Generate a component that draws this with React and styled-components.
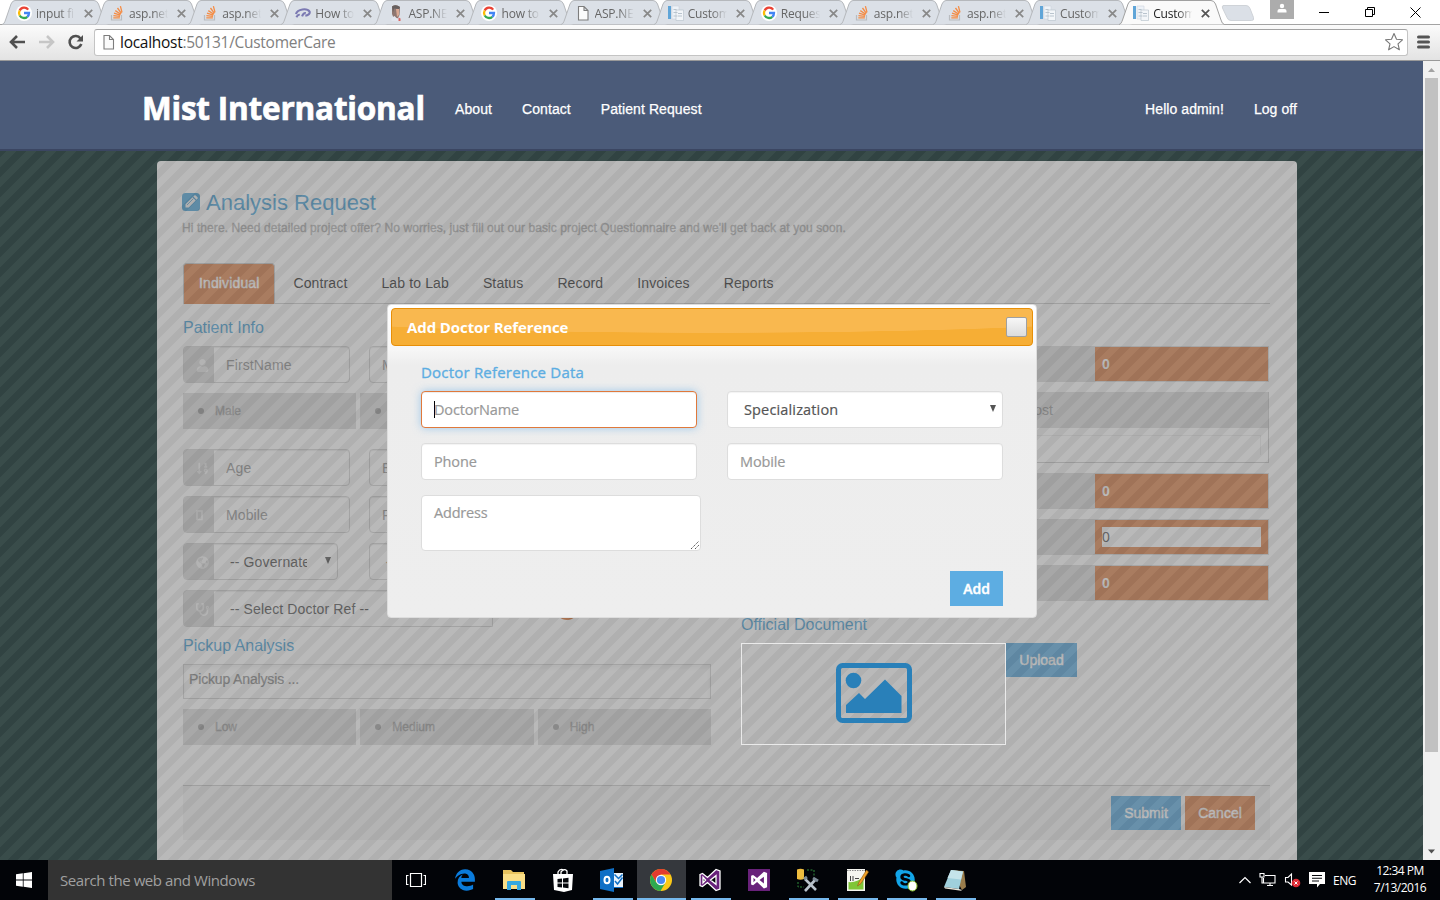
import React from "react";
import styled, { createGlobalStyle, css } from "styled-components";
import { FaEdgeLegacy, FaSkype, FaStethoscope, FaGlobeAmericas, FaUser, FaSortNumericDown } from "react-icons/fa";

const ui = '"Open Sans", "Noto Sans", sans-serif';
const arial = '"Liberation Sans", Arial, sans-serif';

const GlobalStyle = createGlobalStyle`
  *, *::before, *::after { box-sizing: border-box; }
  html, body { margin: 0; padding: 0; overflow: hidden; }
  body { font-family: ${arial}; font-size: 14px; color: #555; }
`;

const Desktop = styled.div`
  width: 1440px;
  height: 900px;
  display: flex;
  flex-direction: column;
  overflow: hidden;
  background: #fff;
`;

/* ---------- browser window ---------- */

const TabStrip = styled.div`
  height: 25px;
  flex: none;
  display: flex;
  position: relative;
  padding-left: 2px;
  border-bottom: 1px solid #a3a3a3;
`;

const TabShell = styled.div`
  width: 93.1px;
  height: 25px;
  flex: none;
  position: relative;
  z-index: ${(p) => (p.$active ? 2 : 1)};
`;

const TabShape = styled.svg`
  position: absolute;
  left: 0;
  top: 0;
  overflow: visible;
`;

const TabBody = styled.div`
  position: relative;
  height: 25px;
  display: flex;
  align-items: center;
  padding: 1px 0 0 14px;
`;

const Favicon = styled.span`
  width: 16px;
  height: 16px;
  flex: none;
  display: flex;
`;

const TabTitle = styled.span`
  width: 40px;
  margin-left: 4px;
  white-space: nowrap;
  font: 12px ${ui};
  letter-spacing: -0.2px;
  color: ${(p) => (p.$active ? "#222" : "#666")};
  mask-image: linear-gradient(90deg, #000 60%, transparent 98%);
`;

const TabClose = styled.svg`
  margin-left: 8px;
  flex: none;
`;

const WindowButtons = styled.div`
  margin: 0 2px 0 auto;
  display: flex;
  height: 24px;
`;

const ProfileBox = styled.div`
  width: 24px;
  height: 19px;
  margin-right: 8px;
  background: #acacac;
  display: flex;
  justify-content: center;
`;

const WindowButton = styled.div`
  width: 45.5px;
  height: 24px;
  display: flex;
  align-items: center;
  justify-content: center;
`;

const Toolbar = styled.div`
  height: 36px;
  flex: none;
  display: flex;
  align-items: center;
  padding: 0 10px 2px 8px;
  background: linear-gradient(#fbfbfb, #e3e3e3);
  border-bottom: 1px solid #999;
`;

const AddressBar = styled.div`
  flex: 1;
  height: 27px;
  margin: 1px 9px 0 10px;
  padding: 0 3px 0 7px;
  display: flex;
  align-items: center;
  border: 1px solid #c4c4c4;
  border-top-color: #a2a2a2;
  border-radius: 3px;
  background: #fff;
`;

const Url = styled.span`
  margin-left: 5px;
  flex: 1;
  font: 15.5px ${ui};
  letter-spacing: -0.28px;
  color: #808080;
  b { font-weight: 400; color: #111; }
`;

const Viewport = styled.div`
  height: 799px;
  flex: none;
  display: flex;
`;

const Page = styled.div`
  width: 1423px;
  height: 799px;
  position: relative;
  overflow: hidden;
  background: #002523;
`;

const Scrollbar = styled.div`
  width: 17px;
  background: #f1f1f1;
  display: flex;
  flex-direction: column;
  align-items: center;
`;

const ScrollThumb = styled.div`
  width: 13px;
  height: 674px;
  background: #c1c1c1;
`;

const ScrollArrow = styled.svg`
  width: 17px;
  height: 17px;
  flex: none;
  margin-top: ${(p) => (p.$bottom ? "auto" : 0)};
`;

/* ---------- site header ---------- */

const SiteHeader = styled.header`
  position: relative;
  z-index: 3;
  height: 90px;
  display: flex;
  align-items: center;
  padding: 8px 126px 0 142px;
  background: #4b5b79;
  border-bottom: 2px solid #3b4662;
`;

const Brand = styled.h1`
  margin: -3px 0 0;
  width: 313px;
  font: 700 31.5px ${ui};
  letter-spacing: -0.2px;
  color: #fff;
  white-space: nowrap;
  -webkit-text-stroke: 0.7px #fff;
`;

const NavLink = styled.a`
  margin-right: ${(p) => (p.$last ? 0 : "30px")};
  margin-left: ${(p) => (p.$push ? "auto" : 0)};
  color: #fff;
  white-space: nowrap;
  letter-spacing: 0.08px;
  -webkit-text-stroke: 0.25px #fff;
`;

/* ---------- request form ---------- */

const Card = styled.main`
  width: 1140px;
  height: 760px;
  margin: 10px 0 0 157px;
  padding: 27px 27px 0 26px;
  background: #fff;
  border-radius: 4px;
`;

const CardTitle = styled.h2`
  margin: 0 0 0 -1px;
  height: 28px;
  display: flex;
  align-items: center;
  gap: 6px;
  font: 22px/28px ${arial};
  color: #4ca4d8;
  span { padding-top: 2px; }
`;

const Subtitle = styled.p`
  margin: 5px 0 27px -1px;
  height: 15px;
  font: 12px/15px ${arial};
  letter-spacing: 0.085px;
  color: #b2b2b2;
  -webkit-text-stroke: 0.35px #b2b2b2;
`;

const FormTabs = styled.nav`
  height: 41px;
  display: flex;
  gap: 2px;
  border-bottom: 1px solid #ccc;
`;

const FormTab = styled.div`
  height: 40px;
  padding: 0 16px;
  line-height: 40px;
  letter-spacing: 0.13px;
  color: #333;
  ${(p) => p.$active && css`
    padding: 0 15px;
    height: 41px;
    background: #df854f;
    border: 1px solid #ccc;
    border-bottom: 0;
    border-radius: 4px 4px 0 0;
    color: #fff;
    line-height: 39px;
    -webkit-text-stroke: 0.4px #fff;
  `}
`;

const Columns = styled.div`
  display: grid;
  grid-template-columns: 528px 528px;
  column-gap: 30px;
  padding-top: 14px;
  height: 481px;
`;

const Column = styled.section`
  display: flex;
  flex-direction: column;
  gap: 10px;
  padding-top: ${(p) => p.$top || 0}px;
`;

const SectionTitle = styled.h3`
  margin: ${(p) => (p.$tight ? "-1px 0 0" : 0)};
  height: 18px;
  font: 16px/20px ${arial};
  color: #4ca4d8;
`;

const Row = styled.div`
  display: flex;
  gap: ${(p) => p.$gap ?? 19}px;
  margin-top: ${(p) => p.$mt || 0}px;
`;

const InputGroup = styled.div`
  width: ${(p) => p.$w}px;
  height: 37px;
  display: flex;
  border: 1px solid #d4d4d4;
  border-radius: 4px ${(p) => (p.$square ? "0 0" : "4px 4px")} 4px;
  box-shadow: inset 0 1px 1px rgba(0, 0, 0, 0.08);
  white-space: nowrap;
`;

const Addon = styled.span`
  width: 30px;
  flex: none;
  display: flex;
  align-items: center;
  justify-content: center;
  padding: 2px 0 0 6px;
  border-radius: 3px 0 0 3px;
  background: #d8d8d8;
  color: #f3f3f3;
  font-size: 13px;
`;

const FieldText = styled.span`
  flex: 1;
  padding-left: ${(p) => (p.$select ? 16 : 12)}px;
  line-height: 37px;
  letter-spacing: 0.13px;
  color: ${(p) => (p.$select ? "#555" : "#999")};
`;

const Clip = styled.span`
  display: block;
  width: ${(p) => p.$w}px;
  overflow: hidden;
`;

const Caret = styled.span`
  width: 0;
  height: 0;
  align-self: center;
  margin: -3px 6px 0 0;
  border: solid transparent;
  border-width: 7px 3.5px 0;
  border-top-color: #555;
`;

const Toggle = styled.div`
  flex: 1;
  height: 36px;
  display: flex;
  align-items: center;
  gap: 11px;
  padding-left: 15px;
  background: #dedede;
  font-size: 12px;
  color: #a4a4a4;
  -webkit-text-stroke: 0.35px #a4a4a4;
  &::before {
    content: "";
    width: 6px;
    height: 6px;
    border-radius: 50%;
    background: #a0a0a0;
  }
`;

const RoundAdd = styled.span`
  width: 22px;
  height: 22px;
  margin: 8px 0 0 63px;
  border-radius: 50%;
  background: #d9702f;
`;

const PickupInput = styled.div`
  height: 35px;
  border: 1px solid #d4d4d4;
  box-shadow: inset 0 3px 4px rgba(0, 0, 0, 0.06);
  padding-left: 5px;
  line-height: 28px;
  letter-spacing: -0.15px;
  color: #8c8c8c;
  -webkit-text-stroke: 0.2px #8c8c8c;
`;

const TotalRow = styled.div`
  height: 36px;
  display: flex;
  justify-content: flex-end;
  padding: 1px;
  background: #dcdcdc;
`;

const TotalValue = styled.div`
  width: 173px;
  padding: 7px;
  background: #df854f;
  color: #fff;
  font-weight: 700;
  line-height: 20px;
`;

const TotalInput = styled.div`
  height: 20px;
  background: #fff;
  color: #555;
  font-weight: 400;
`;

const CostTable = styled.div`
  height: 71px;
  border: 1px solid #ccc;
  border-top: 0;
`;

const CostHead = styled.div`
  height: 36px;
  padding: 0 215px 0 0;
  background: #dedede;
  color: #999;
  line-height: 36px;
  text-align: right;
`;

const CostBody = styled.div`
  margin: 7px 7px 0 0;
  height: 20px;
  border: solid #eee;
  border-width: 1px 1px 0 0;
`;

const DocumentRow = styled.div`
  display: flex;
  align-items: flex-start;
`;

const ImageBox = styled.div`
  position: relative;
  z-index: 2;
  width: 265px;
  height: 102px;
  border: 1px solid #eaeaea;
  display: flex;
  justify-content: center;
  align-items: center;
  padding-bottom: 2px;
`;

const Button = styled.div`
  width: ${(p) => p.$w}px;
  height: ${(p) => p.$h || 34}px;
  line-height: ${(p) => p.$h || 34}px;
  text-align: center;
  color: #fff;
  background: ${(p) => (p.$warn ? "#df854f" : "#5dade2")};
  -webkit-text-stroke: 0.4px #fff;
`;

const FormFooter = styled.footer`
  height: 55px;
  padding: 10px 15px 0 0;
  display: flex;
  justify-content: flex-end;
  gap: 4px;
  border-top: 1px solid #ccc;
  background: #f4f4f4;
`;

const Overlay = styled.div`
  position: absolute;
  z-index: 1;
  inset: 0;
  opacity: 0.5;
  background: linear-gradient(135deg, #727272 25%, #616161 25% 50%, #727272 50% 75%, #616161 75%);
  background-size: 20px 20px;
  background-position: -3px 0;
`;

/* ---------- dialog ---------- */

const Dialog = styled.div`
  position: absolute;
  z-index: 4;
  left: 387px;
  top: 243px;
  width: 650px;
  height: 314px;
  padding: 3px;
  border: 1px solid #ddd;
  border-radius: 4px;
  background: linear-gradient(#fff 0, #f7f7f7 44px, #ededed 60px, #eee 100%);
  font-family: ${ui};
  font-size: 14.5px;
`;

const DialogTitle = styled.div`
  height: 38px;
  display: flex;
  align-items: center;
  justify-content: space-between;
  padding: 0 5px 0 15px;
  border: 1px solid #e78f08;
  border-radius: 4px;
  background:
    radial-gradient(ellipse 480px 24px at 50% 0, #f9b84f 98%, transparent 100%),
    #f6ae35;
  color: #fff;
  font: 700 15px ${ui};
  letter-spacing: -0.1px;
`;

const DialogClose = styled.span`
  width: 21px;
  height: 20px;
  border: 1px solid #a0a0a0;
  border-radius: 2px;
  background: linear-gradient(#f7f7f7, #dcdcdc);
`;

const DialogForm = styled.div`
  padding: 15px 30px 0;
`;

const DialogHeading = styled.h3`
  margin: 0 0 8px;
  height: 22px;
  font: 400 15px/22px ${ui};
  letter-spacing: 0.2px;
  color: #5dade2;
  -webkit-text-stroke: 0.35px #5dade2;
`;

const DialogGrid = styled.div`
  display: grid;
  grid-template-columns: 276px 276px;
  column-gap: 30px;
  row-gap: 15px;
`;

const DialogField = styled.div`
  height: 37px;
  display: flex;
  align-items: center;
  padding: 0 6px 0 ${(p) => (p.$select ? 16 : 12)}px;
  border: 1px solid ${(p) => (p.$focus ? "#e0793b" : "#ddd")};
  border-radius: 4px;
  background: #fff;
  color: ${(p) => (p.$select ? "#555" : "#999")};
  letter-spacing: ${(p) => (p.$select ? 0.15 : -0.15)}px;
  -webkit-text-stroke: 0.2px;
  justify-content: ${(p) => (p.$select ? "space-between" : "flex-start")};
  box-shadow: ${(p) =>
    p.$focus
      ? "inset 0 1px 1px rgba(0,0,0,.075), 0 0 8px rgba(102,175,233,.6)"
      : "inset 0 1px 1px rgba(0,0,0,.05)"};
  ${(p) => p.$select && css`${Caret} { margin: -3px 0 0; }`}
`;

const TextCursor = styled.span`
  width: 1px;
  height: 17px;
  margin-right: -1px;
  background: #000;
`;

const DialogArea = styled.div`
  width: 280px;
  height: 56px;
  display: flex;
  justify-content: space-between;
  padding: 7px 0 0 12px;
  border: 1px solid #ddd;
  border-radius: 4px;
  background: #fff;
  color: #999;
  letter-spacing: -0.2px;
  -webkit-text-stroke: 0.2px;
`;

const Grip = styled.svg`
  align-self: flex-end;
`;

const DialogActions = styled.div`
  display: flex;
  justify-content: flex-end;
  margin-top: 20px;
  ${Button} { font-weight: 600; font-size: 14px; }
`;

/* ---------- taskbar ---------- */

const Taskbar = styled.div`
  height: 40px;
  flex: none;
  display: flex;
  background: #020408;
`;

const StartButton = styled.div`
  width: 48px;
  display: flex;
  align-items: center;
  justify-content: center;
`;

const Search = styled.div`
  width: 344px;
  padding-left: 12px;
  background: #333;
  color: #a0a0a0;
  font: 15px/41px ${ui};
  letter-spacing: -0.42px;
`;

const Task = styled.div`
  width: 49px;
  height: 40px;
  display: flex;
  align-items: center;
  justify-content: center;
  padding-right: 1px;
  position: relative;
  background: ${(p) => (p.$active ? "#35383d" : "transparent")};
  &::after {
    content: "";
    position: absolute;
    left: ${(p) => (p.$active ? 0 : 5)}px;
    right: ${(p) => (p.$active ? 0 : 4)}px;
    bottom: 0;
    height: 2px;
    background: ${(p) => (p.$open ? "#76b9ed" : "transparent")};
  }
`;

const Tray = styled.div`
  margin-left: auto;
  display: flex;
  align-items: center;
  gap: 8px;
  padding-right: 4px;
  color: #fff;
  font: 12px/17px ${ui};
  letter-spacing: -0.5px;
`;

const Clock = styled.div`
  width: 67px;
  margin: -2px 0 0 5px;
  padding-right: 5px;
  text-align: center;
  white-space: nowrap;
`;

/* ---------- drawings ---------- */

const GoogleIcon = () => (
  <svg width="16" height="16" viewBox="0 0 16 16" fill="none" strokeWidth="2.3">
    <circle cx="8" cy="8" r="8" fill="#fff" />
    <path d="M12.2 4.6A5 5 0 0 0 3.7 5.5" stroke="#ea4335" />
    <path d="M3.7 5.5A5 5 0 0 0 3.7 10.5" stroke="#fbbc05" />
    <path d="M3.7 10.5A5 5 0 0 0 11.3 11.8" stroke="#34a853" />
    <path d="M8 8h5A5 5 0 0 1 11.3 11.8" stroke="#4285f4" />
  </svg>
);

const StackIcon = () => (
  <svg width="16" height="16" viewBox="0 0 16 16" fill="none">
    <path d="M2.5 10v5h10v-5" stroke="#b9bcc0" strokeWidth="1.2" />
    <g stroke="#f48c45" strokeWidth="1.3">
      <path d="M4.3 12.8h6.6M4.4 10.6l6.6.8M5 8.2l6.3 2M6.3 5.6l5.5 3.6M8.5 3l3.9 5.3M11.4 1.2l1.6 6.2" />
    </g>
  </svg>
);

const SwooshIcon = () => (
  <svg width="17" height="16" viewBox="0 0 17 16" fill="none" stroke="#7b79b2">
    <path d="M1 9C2.500 3.500 13 2.500 15.500 6.500c.8 2.500-2 4-4.500 4.300" strokeWidth="2.200" />
    <path d="M1.500 12.500Q3 9.500 5 10M7.500 11.500Q9 7.500 11.500 8" strokeWidth="2.200" />
  </svg>
);

const PortraitIcon = () => (
  <svg width="16" height="16" viewBox="0 0 16 16">
    <path d="M4 1.500q4-2.500 8 .500l-.500 8-2 4H6L4 9z" fill="#8f7771" />
    <path d="M4 1.500q4-2.500 8 .500l-1 2-5-.500-1 4z" fill="#66605f" />
    <path d="M8 4h3v6l-2 2z" fill="#d9a893" />
    <path d="M3.500 13l3-2 2 2 3.500 1v2h-8.500z" fill="#e3e6ee" />
    <path d="M10.500 12.500l2 1v2.500h-2z" fill="#d96460" />
  </svg>
);

const PageIcon = ({ w = 16 }) => (
  <svg width={w} height="16" viewBox={w < 16 ? "2 0 12 16" : "0 0 16 16"} fill="#fbfbfb" stroke="#7d7d7d" strokeWidth="1.1">
    <path d="M3.500 1.500h5.500l4 4v9.500h-9.500zM9 1.500v4h4" />
  </svg>
);

const DocsIcon = () => (
  <svg width="16" height="16" viewBox="0 0 16 16">
    <path d="M0 1h3v13h-3z" fill="#5fa5d8" />
    <path d="M4 1h7v13h-7z" fill="#eef3f8" stroke="#ccd5de" strokeWidth=".6" />
    <path d="M8 5h7.500v10.500h-7.500z" fill="#f3f6f9" stroke="#bcc6cf" strokeWidth=".7" />
    <path d="M5.500 4.500h3M5.500 7.500h4M5.500 11h4M10 8.500h4M10 11h4" stroke="#b9c4ce" />
  </svg>
);

const favicons = {
  google: GoogleIcon,
  stack: StackIcon,
  swoosh: SwooshIcon,
  man: PortraitIcon,
  page: PageIcon,
  docs: DocsIcon,
};

const browserTabs = [
  ["google", "input fi"],
  ["stack", "asp.net"],
  ["stack", "asp.net"],
  ["swoosh", "How to"],
  ["man", "ASP.NE"],
  ["google", "how to"],
  ["page", "ASP.NE"],
  ["docs", "Custom"],
  ["google", "Reques"],
  ["stack", "asp.net"],
  ["stack", "asp.net"],
  ["docs", "Custom"],
  ["docs", "Custom"],
];

function BrowserTab({ icon, title, active }) {
  const Icon = favicons[icon];
  return (
    <TabShell $active={active}>
      <TabShape width="106" height="25">
        <path
          d="M0 24.500C2 24 2.500 22.500 3.500 20L9 4Q10.500.500 13 .500H92Q95 .500 96.500 4L102 20Q103 24 105.500 24.500"
          fill={active ? "#fafafa" : "#dbe0e7"}
          stroke={active ? "#a0a0a0" : "#b5b8bc"}
        />
      </TabShape>
      <TabBody>
        <Favicon><Icon /></Favicon>
        <TabTitle $active={active}>{title}</TabTitle>
        <TabClose width="9" height="9" stroke={active ? "#555" : "#888"} strokeWidth="1.7">
          <path d="M.8.800l7.400 7.400M8.200.800l-7.400 7.400" />
        </TabClose>
      </TabBody>
    </TabShell>
  );
}

const NewTabShape = styled.svg`
  margin-left: 9px;
`;

const NewTab = () => (
  <NewTabShape width="36" height="25">
    <path d="M2 5.500h23q3 0 4 3l3.500 9q1 3-2 3H10q-3 0-4-3L1.500 8Q.500 5.500 3 5.500z" fill="#dbe0e7" stroke="#cfd3d8" />
  </NewTabShape>
);

const ImageIcon = () => (
  <svg width="76" height="60" viewBox="0 0 76 60" fill="#2980b9">
    <rect x="2.500" y="2.500" width="71" height="55" rx="4" fill="none" stroke="#2980b9" strokeWidth="5" />
    <circle cx="17.500" cy="17.500" r="7.800" />
    <path d="M10 50v-8l13-12 6 6 20-19.500L65.500 33v17z" />
  </svg>
);

const PhoneIcon = styled.svg`
  margin-right: 5px;
`;

const VsIcon = ({ bg, fg }) => (
  <svg width="24" height="24" viewBox="0 0 24 24">
    {bg && <path d="M1 1l17 0 5 0v22H1z" fill={bg} />}
    <path
      d="M2 6.500L4.500 5.500l5 4L18 1.500 22 3v18l-4 1.500L9.500 14.500l-5 4L2 17.500z M5 9.200v5.600L7.600 12z M12.500 12L18 16.300V7.700z"
      fillRule="evenodd" fill={fg} stroke={bg ? "none" : "#fff"} strokeWidth="1.300"
      transform={bg ? "translate(2.500 2.500) scale(.8)" : undefined}
    />
  </svg>
);

const tasks = [
  { icon: (
    <svg width="20" height="16" fill="none" stroke="#fff" strokeWidth="1.200">
      <path d="M4.500 1.500h11v13h-11zM2.500 3.500h-2v9h2M17.500 3.500h2v9h-2" />
    </svg>
  ) },
  { icon: <FaEdgeLegacy size={22} color="#0a7bdc" /> },
  { open: true, icon: (
    <svg width="24" height="22">
      <path d="M1 1h8l2 2h11v17H1z" fill="#e9c45e" />
      <path d="M1 5h22v15H1z" fill="#fbdf86" />
      <path d="M5 21v-8q0-1 1-1h12q1 0 1 1v8h-4v-5H9v5z" fill="#37a9e0" />
    </svg>
  ) },
  { icon: (
    <svg width="22" height="24">
      <path d="M1 6h20l-1 16-8 2-10-2z" fill="#fff" />
      <path d="M6 7V4q2-4 6-2M9 7V4q3-4 6-1v4" fill="none" stroke="#fff" strokeWidth="1.300" />
      <path d="M5.500 11l4.500-.500v4H5.500zM11 10.400l5.500-.600v4.700H11zM5.500 15.500H10v4l-4.500-.500zM11 15.500h5.500v4.700l-5.500-.600z" fill="#05070b" />
    </svg>
  ) },
  { open: true, icon: (
    <svg width="24" height="24">
      <path d="M11 5h12v14H11z" fill="#eaf3fb" />
      <path d="M0 3l14-3v24L0 21z" fill="#0f6fc6" />
      <ellipse cx="7" cy="12" rx="2.500" ry="3.300" fill="none" stroke="#fff" strokeWidth="2" />
      <path d="M14.500 6.500l4 4 4-4M15 13l2.500 3 5-6.500" stroke="#0f6fc6" strokeWidth="1.500" fill="none" />
      <path d="M11 19h12v1H11z" fill="#0f6fc6" />
    </svg>
  ) },
  { open: true, active: true, icon: (
    <svg width="22" height="22" viewBox="0 0 22 22">
      <circle cx="11" cy="11" r="11" fill="#fbc918" />
      <path d="M1.500 5.500A11 11 0 0 1 20.500 5.500H11L6 13z" fill="#e33b2e" />
      <path d="M1.500 5.500A11 11 0 0 0 10.500 22L15.500 13.500 6.200 13.500z" fill="#2da94f" />
      <circle cx="11" cy="11" r="5.200" fill="#fff" />
      <circle cx="11" cy="11" r="4.100" fill="#4a8af4" />
    </svg>
  ) },
  { open: true, icon: <VsIcon fg="#68217a" /> },
  { icon: <VsIcon bg="#68217a" fg="#fff" /> },
  { open: true, icon: (
    <svg width="24" height="24" fill="none">
      <path d="M1 1.500q3.500-1.500 7 0V11q-3.500 1.500-7 0z" fill="#efbd3e" />
      <path d="M11 2h7v7M2 14v5h6" stroke="#2f8a3a" strokeDasharray="2 1.500" />
      <path d="M9 11l11 11M20 11L9 23" stroke="#b9c3cc" strokeWidth="2.600" />
      <path d="M17 10l5 3M8 11l3-2" stroke="#7d8b97" strokeWidth="3" />
    </svg>
  ) },
  { open: true, icon: (
    <svg width="24" height="24">
      <path d="M2 1h18v22H2z" fill="#f5f5f0" />
      <path d="M3.500 14q8 1 15-5v12.500h-15z" fill="#7fc637" />
      <path d="M2 2.500h18" stroke="#888" strokeDasharray="1.500 1" />
      <path d="M5.500 8v5M8 8v5M10 10.500h4" stroke="#444" />
      <path d="M21.500 2L14 14l-1.500 4 3.500-2.500L23.500 4z" fill="#f0a028" stroke="#8a5a14" strokeWidth=".6" />
    </svg>
  ) },
  { open: true, icon: (
    <svg width="24" height="24">
      <FaSkype size={23} color="#12a5e8" />
      <ellipse cx="18.500" cy="18" rx="4.500" ry="5" fill="#fff" stroke="#8bbf2c" />
    </svg>
  ) },
  { open: true, icon: (
    <svg width="24" height="22">
      <path d="M8 1l13 1 2 16-4 3z" fill="#9a7d4c" />
      <path d="M8 1l12 1.500-4 17.500L1 18z" fill="#9fd0dc" />
      <path d="M8 1l12 1.500-2 8L4.500 9z" fill="#c5e4ea" />
      <path d="M1 18l15 2 3 1-1 .800L2 19.500z" fill="#e8e4d8" />
    </svg>
  ) },
];

const formTabs = ["Individual", "Contract", "Lab to Lab", "Status", "Record", "Invoices", "Reports"];

function Group({ icon, w = 167, children }) {
  return (
    <InputGroup $w={w}>
      {icon && <Addon>{icon}</Addon>}
      {children}
    </InputGroup>
  );
}

function RequestForm() {
  return (
    <Card>
      <CardTitle>
        <svg width="18" height="18" viewBox="0 0 18 18">
          <rect width="18" height="18" rx="3.500" fill="#4ca4d8" />
          <path d="M3.500 14.500v-3.200l7-7 3.200 3.200-7 7zM11.300 3.500l1-1q.700-.500 1.400 0l1.800 1.800q.5.700 0 1.400l-1 1z" fill="#fff" />
          <path d="M5 12l6.500-6.500" stroke="#4ca4d8" strokeWidth=".8" />
        </svg>
        <span>Analysis Request</span>
      </CardTitle>
      <Subtitle>
        Hi there. Need detailed project offer? No worries, just fill out our basic project
        Questionnaire and we'll get back at you soon.
      </Subtitle>
      <FormTabs>
        {formTabs.map((t, i) => <FormTab key={t} $active={i === 0}>{t}</FormTab>)}
      </FormTabs>
      <Columns>
        <Column>
          <SectionTitle>Patient Info</SectionTitle>
          <Row>
            <Group icon={<FaUser />}><FieldText>FirstName</FieldText></Group>
            <InputGroup $w={167}><FieldText>M</FieldText></InputGroup>
          </Row>
          <Row $gap={4}>
            <Toggle>Male</Toggle>
            <Toggle />
            <Toggle />
          </Row>
          <Row $mt={10}>
            <Group icon={<FaSortNumericDown />}><FieldText>Age</FieldText></Group>
            <InputGroup $w={167}><FieldText>E</FieldText></InputGroup>
          </Row>
          <Row>
            <Group
              icon={(
                <PhoneIcon width="7" height="11">
                  <path d="M1 1h5v8.500H1z" fill="none" stroke="#f3f3f3" strokeWidth="1.600" />
                </PhoneIcon>
              )}
            >
              <FieldText>Mobile</FieldText>
            </Group>
            <InputGroup $w={167}><FieldText>P</FieldText></InputGroup>
          </Row>
          <Row $gap={31}>
            <Group w={155} icon={<FaGlobeAmericas />}>
              <FieldText $select><Clip $w={77}>-- Governate</Clip></FieldText>
              <Caret />
            </Group>
            <InputGroup $w={155}><FieldText $select>--</FieldText></InputGroup>
          </Row>
          <Row $gap={0}>
            <InputGroup $w={310} $square>
              <Addon><FaStethoscope /></Addon>
              <FieldText $select>-- Select Doctor Ref --</FieldText>
            </InputGroup>
            <RoundAdd />
          </Row>
          <SectionTitle $tight>Pickup Analysis</SectionTitle>
          <PickupInput>Pickup Analysis ...</PickupInput>
          <Row $gap={4}>
            <Toggle>Low</Toggle>
            <Toggle>Medium</Toggle>
            <Toggle>High</Toggle>
          </Row>
        </Column>
        <Column $top={28}>
          <TotalRow><TotalValue>0</TotalValue></TotalRow>
          <CostTable>
            <CostHead>Cost</CostHead>
            <CostBody />
          </CostTable>
          <TotalRow><TotalValue>0</TotalValue></TotalRow>
          <TotalRow><TotalValue><TotalInput>0</TotalInput></TotalValue></TotalRow>
          <TotalRow><TotalValue>0</TotalValue></TotalRow>
          <Row $mt={4}><SectionTitle>Official Document</SectionTitle></Row>
          <DocumentRow>
            <ImageBox><ImageIcon /></ImageBox>
            <Button $w={71}>Upload</Button>
          </DocumentRow>
        </Column>
      </Columns>
      <FormFooter>
        <Button $w={70}>Submit</Button>
        <Button $w={70} $warn>Cancel</Button>
      </FormFooter>
    </Card>
  );
}

function DoctorDialog() {
  return (
    <Dialog>
      <DialogTitle>
        Add Doctor Reference
        <DialogClose />
      </DialogTitle>
      <DialogForm>
        <DialogHeading>Doctor Reference Data</DialogHeading>
        <DialogGrid>
          <DialogField $focus><TextCursor />DoctorName</DialogField>
          <DialogField $select>Specialization<Caret /></DialogField>
          <DialogField>Phone</DialogField>
          <DialogField>Mobile</DialogField>
          <DialogArea>
            Address
            <Grip width="10" height="10" stroke="#555" strokeDasharray="1.400 .8">
              <path d="M1 9l8-8M5 9l4-4" />
            </Grip>
          </DialogArea>
        </DialogGrid>
        <DialogActions><Button $w={53} $h={35}>Add</Button></DialogActions>
      </DialogForm>
    </Dialog>
  );
}

export default function App() {
  return (
    <>
      <GlobalStyle />
      <Desktop>
        <TabStrip>
          {browserTabs.map(([icon, title], i) => (
            <BrowserTab key={i} icon={icon} title={title} active={i === browserTabs.length - 1} />
          ))}
          <NewTab />
          <WindowButtons>
            <ProfileBox>
              <svg width="10" height="14" fill="#fff">
                <circle cx="5" cy="6" r="2.200" />
                <path d="M.5 12.500V11q0-2 2-2h5q2 0 2 2v1.500z" />
              </svg>
            </ProfileBox>
            <WindowButton>
              <svg width="10" height="10"><path d="M0 5.500h10" stroke="#000" /></svg>
            </WindowButton>
            <WindowButton>
              <svg width="10" height="10" fill="none" stroke="#000">
                <path d="M.5 2.500h7v7h-7zM2.500 2.500v-2h7v7h-2" />
              </svg>
            </WindowButton>
            <WindowButton>
              <svg width="11" height="11" stroke="#000"><path d="M.5.500l10 10M10.500.500l-10 10" /></svg>
            </WindowButton>
          </WindowButtons>
        </TabStrip>
        <Toolbar>
          <svg width="76" height="18" fill="none" stroke="#505050" strokeWidth="2.600">
            <path d="M17 9H3M9 3L3 9l6 6" />
            <path d="M31 9h14M39 3l6 6-6 6" stroke="#c6c6c6" />
            <path d="M72.500 5.500A6 6 0 1 0 73.300 11" />
            <path d="M75 2v6.500h-6.500z" fill="#505050" stroke="none" />
          </svg>
          <AddressBar>
            <PageIcon w={13} />
            <Url><b>localhost</b>:50131/CustomerCare</Url>
            <svg width="20" height="20" fill="none" stroke="#777" strokeWidth="1.100">
              <path d="M10 1.500l2.500 5.700 6 .600-4.500 4 1.400 6L10 14.600 4.600 17.800l1.400-6-4.500-4 6-.600z" strokeLinejoin="round" />
            </svg>
          </AddressBar>
          <svg width="13" height="14" stroke="#555" strokeWidth="3" strokeLinecap="round">
            <path d="M1.500 2h10M1.500 7h10M1.500 12h10" />
          </svg>
        </Toolbar>
        <Viewport>
          <Page>
            <SiteHeader>
              <Brand>Mist International</Brand>
              <NavLink>About</NavLink>
              <NavLink>Contact</NavLink>
              <NavLink>Patient Request</NavLink>
              <NavLink $push>Hello admin!</NavLink>
              <NavLink $last>Log off</NavLink>
            </SiteHeader>
            <RequestForm />
            <Overlay />
            <DoctorDialog />
          </Page>
          <Scrollbar>
            <ScrollArrow><path d="M5 11l3.500-4 3.500 4z" fill="#a3a3a3" /></ScrollArrow>
            <ScrollThumb />
            <ScrollArrow $bottom><path d="M5 6.500l3.500 4 3.500-4z" fill="#505050" /></ScrollArrow>
          </Scrollbar>
        </Viewport>
        <Taskbar>
          <StartButton>
            <svg width="16" height="16" fill="#fff">
              <path d="M0 2.300l6.800-1v6.200H0zM7.600 1.200L16 0v7.500H7.600zM0 8.400h6.800v6.300L0 13.700zM7.600 8.400H16V16l-8.400-1.200z" />
            </svg>
          </StartButton>
          <Search>Search the web and Windows</Search>
          {tasks.map((t, i) => <Task key={i} $open={t.open} $active={t.active}>{t.icon}</Task>)}
          <Tray>
            <svg width="12" height="8" fill="none" stroke="#fff" strokeWidth="1.200"><path d="M.5 7L6 1.500 11.500 7" /></svg>
            <svg width="17" height="16" fill="none" stroke="#fff" strokeWidth="1.100">
              <path d="M6 3.500h10v7.500H4.500V6M8 13.500h6M11 11v2.500M1 1.500h4v3.500H1zM3 5v6h1.500" />
            </svg>
            <svg width="17" height="16" fill="none">
              <path d="M1.500 5.500H4L7.500 2v11L4 10H1.500z" stroke="#fff" strokeWidth="1.100" />
              <circle cx="12" cy="11" r="4.300" fill="#e02b35" />
              <path d="M10.500 9.500l3 3M13.500 9.500l-3 3" stroke="#fff" />
            </svg>
            <svg width="16" height="16">
              <path d="M0 0h16v12h-5l-3 3.500V12H0z" fill="#fff" />
              <path d="M3 3.500h10M3 6.200h10M3 9h7" stroke="#05070b" strokeWidth="1.100" />
            </svg>
            <span>ENG</span>
            <Clock>12:34 PM<br />7/13/2016</Clock>
          </Tray>
        </Taskbar>
      </Desktop>
    </>
  );
}
